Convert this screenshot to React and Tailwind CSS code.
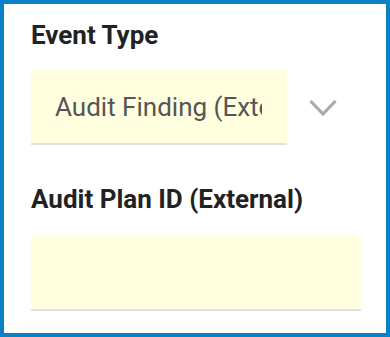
export default function App() {
  return (
    <div
      className="w-[390px] h-[337px] border-4 border-[#0a80c6] bg-white pl-[27px] pt-[16px]"
      style={{ fontFamily: 'Roboto, "Liberation Sans", sans-serif' }}
    >
      <div className="text-[26px] leading-[30px] font-bold text-[#222]">Event Type</div>
      <div className="mt-[20px] flex items-center">
        <div className="w-[256px] h-[75px] bg-[#ffffe0] border-b-2 border-[#e2e2dc] pl-[24px] pr-[25px] flex items-center overflow-hidden">
          <span className="text-[26px] leading-[30px] text-[#555] whitespace-nowrap overflow-hidden">
            Audit Finding (External)
          </span>
        </div>
        <svg className="ml-[22px]" width="28" height="18" viewBox="0 0 28 18">
          <polyline points="1.5,2 14,15 26.5,2" fill="none" stroke="#aaaaaa" strokeWidth="3.2" />
        </svg>
      </div>
      <div className="mt-[39px] text-[26px] leading-[30px] font-bold text-[#222]">
        Audit Plan ID (External)
      </div>
      <div className="mt-[22px] w-[330px] h-[75px] bg-[#ffffe0] border-b-2 border-[#e2e2dc]" />
    </div>
  );
}
